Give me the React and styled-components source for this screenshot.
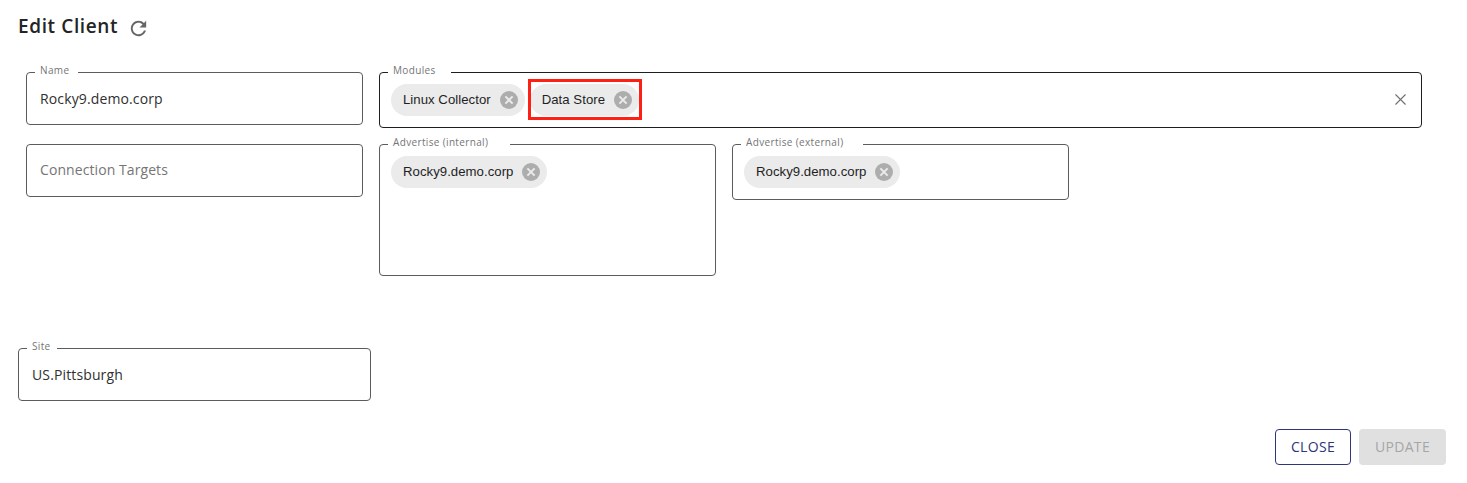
import React from "react";
import styled, { createGlobalStyle } from "styled-components";
import { X } from "lucide-react";

const GlobalStyle = createGlobalStyle`
  html, body {
    margin: 0;
    padding: 0;
    background: #fff;
    font-family: "Open Sans", "Noto Sans", sans-serif;
  }
`;

function ChipDelete() {
  return (
    <svg width="18" height="18" viewBox="0 0 18 18" aria-hidden="true">
      <circle cx="9" cy="9" r="9" fill="#adadad" />
      <path d="M5.4 5.4l7.2 7.2M12.6 5.4l-7.2 7.2" stroke="#ebebeb" strokeWidth="2" fill="none" />
    </svg>
  );
}

function Tag({ label }) {
  return (
    <Chip>
      <ChipText>{label}</ChipText>
      <ChipDelete />
    </Chip>
  );
}

export default function App() {
  return (
    <Page>
      <GlobalStyle />
      <Header>
        <Title>Edit Client</Title>
        <RefreshButton>
          <svg width="23" height="23" viewBox="0 0 24 24" aria-hidden="true">
            <path
              fill="#666"
              d="M17.65 6.35C16.2 4.9 14.21 4 12 4c-4.42 0-7.99 3.58-7.99 8s3.57 8 7.99 8c3.73 0 6.84-2.55 7.73-6h-2.08c-.82 2.33-3.04 4-5.65 4-3.31 0-6-2.69-6-6s2.69-6 6-6c1.66 0 3.14.69 4.22 1.78L13 11h7V4l-2.35 2.35z"
            />
          </svg>
        </RefreshButton>
      </Header>

      <FormRows>
        <Row $height={56}>
          <Field $width={337} $height={53}>
            <Legend $notch={43}>Name</Legend>
            <Value>Rocky9.demo.corp</Value>
          </Field>
          <Field $width={1043} $height={56} $dark $chips>
            <Legend $notch={63}>Modules</Legend>
            <Tag label="Linux Collector" />
            <Highlight>
              <Tag label="Data Store" />
            </Highlight>
            <ClearIcon>
              <X size={19} strokeWidth={1.4} color="#6f6f6f" />
            </ClearIcon>
          </Field>
        </Row>
        <Row $height={132}>
          <Field $width={337} $height={53}>
            <Value $placeholder>Connection Targets</Value>
          </Field>
          <Field $width={337} $height={132} $chips>
            <Legend $notch={122}>Advertise (internal)</Legend>
            <Tag label="Rocky9.demo.corp" />
          </Field>
          <Field $width={337} $height={56} $chips>
            <Legend $notch={122}>Advertise (external)</Legend>
            <Tag label="Rocky9.demo.corp" />
          </Field>
        </Row>
      </FormRows>

      <SiteBlock>
        <Field $width={353} $height={53}>
          <Legend $notch={30}>Site</Legend>
          <Value>US.Pittsburgh</Value>
        </Field>
      </SiteBlock>

      <Footer>
        <CloseButton>CLOSE</CloseButton>
        <UpdateButton disabled>UPDATE</UpdateButton>
      </Footer>
    </Page>
  );
}

const Page = styled.div`
  width: 1467px;
  height: 483px;
  box-sizing: border-box;
  padding: 13px 21px 0 18px;
  overflow: hidden;
`;

const Header = styled.div`
  display: flex;
  align-items: center;
  height: 26px;
  gap: 9px;
`;

const Title = styled.h2`
  margin: 0;
  font-size: 19px;
  line-height: 26px;
  font-weight: 600;
  letter-spacing: 0.62px;
  color: #242424;
`;

const RefreshButton = styled.span`
  display: flex;
  margin-top: 4px;
`;

const FormRows = styled.div`
  display: flex;
  flex-direction: column;
  gap: 16px;
  margin: 33px 0 0 8px;
`;

const Row = styled.div`
  display: flex;
  align-items: flex-start;
  gap: 16px;
  height: ${(p) => p.$height}px;
`;

const Field = styled.div`
  position: relative;
  box-sizing: border-box;
  display: flex;
  flex-wrap: wrap;
  gap: 6px;
  align-items: center;
  align-content: flex-start;
  width: ${(p) => p.$width}px;
  height: ${(p) => p.$height}px;
  padding: ${(p) => (p.$chips ? "11px" : "0 13px")};
  border: 1px solid ${(p) => (p.$dark ? "#1f1f1f" : "#5c5c5c")};
  border-radius: 4px;
`;

const Legend = styled.label`
  position: absolute;
  top: -9px;
  left: 8px;
  box-sizing: border-box;
  width: ${(p) => p.$notch}px;
  padding: 0 5px;
  background: #fff;
  font-size: 10px;
  line-height: 12px;
  letter-spacing: 0.35px;
  color: #757575;
  white-space: nowrap;
`;

const Value = styled.div`
  font-size: 14px;
  line-height: 51px;
  letter-spacing: ${(p) => (p.$placeholder ? "0.08px" : "0.13px")};
  color: ${(p) => (p.$placeholder ? "#757575" : "#303030")};
  margin-top: ${(p) => (p.$placeholder ? "-1px" : "0")};
`;

const Chip = styled.div`
  display: inline-flex;
  align-items: center;
  gap: 9px;
  box-sizing: border-box;
  height: 32px;
  padding: 0 7px 0 12px;
  border-radius: 16px;
  background: #ebebeb;
  font-family: "Liberation Sans", Arial, sans-serif;
  font-size: 13.2px;
  letter-spacing: 0.03px;
  color: #1f1f1f;
  white-space: nowrap;
`;

const ChipText = styled.span`
  padding-bottom: 2px;
`;

const Highlight = styled.div`
  position: relative;
  display: flex;
  margin-left: -1px;
  &::after {
    content: "";
    position: absolute;
    inset: -5px -3px -4px -2px;
    border: 3px solid #ff2015;
  }
`;

const ClearIcon = styled.span`
  position: absolute;
  right: 11px;
  top: 17px;
  display: flex;
`;

const SiteBlock = styled.div`
  margin-top: 72px;
`;

const Footer = styled.div`
  display: flex;
  justify-content: flex-end;
  gap: 8px;
  margin-top: 28px;
`;

const CloseButton = styled.button`
  box-sizing: border-box;
  width: 76px;
  height: 36px;
  padding: 0 0 1px;
  border: 1px solid #2e3578;
  border-radius: 4px;
  background: #fff;
  font-family: inherit;
  font-size: 14px;
  letter-spacing: 0.3px;
  color: #2e3578;
`;

const UpdateButton = styled.button`
  box-sizing: border-box;
  width: 87px;
  height: 36px;
  padding: 0 0 1px;
  border: 0;
  border-radius: 4px;
  background: #e0e0e0;
  font-family: inherit;
  font-size: 14px;
  letter-spacing: 0.3px;
  color: #a6a6a6;
`;
